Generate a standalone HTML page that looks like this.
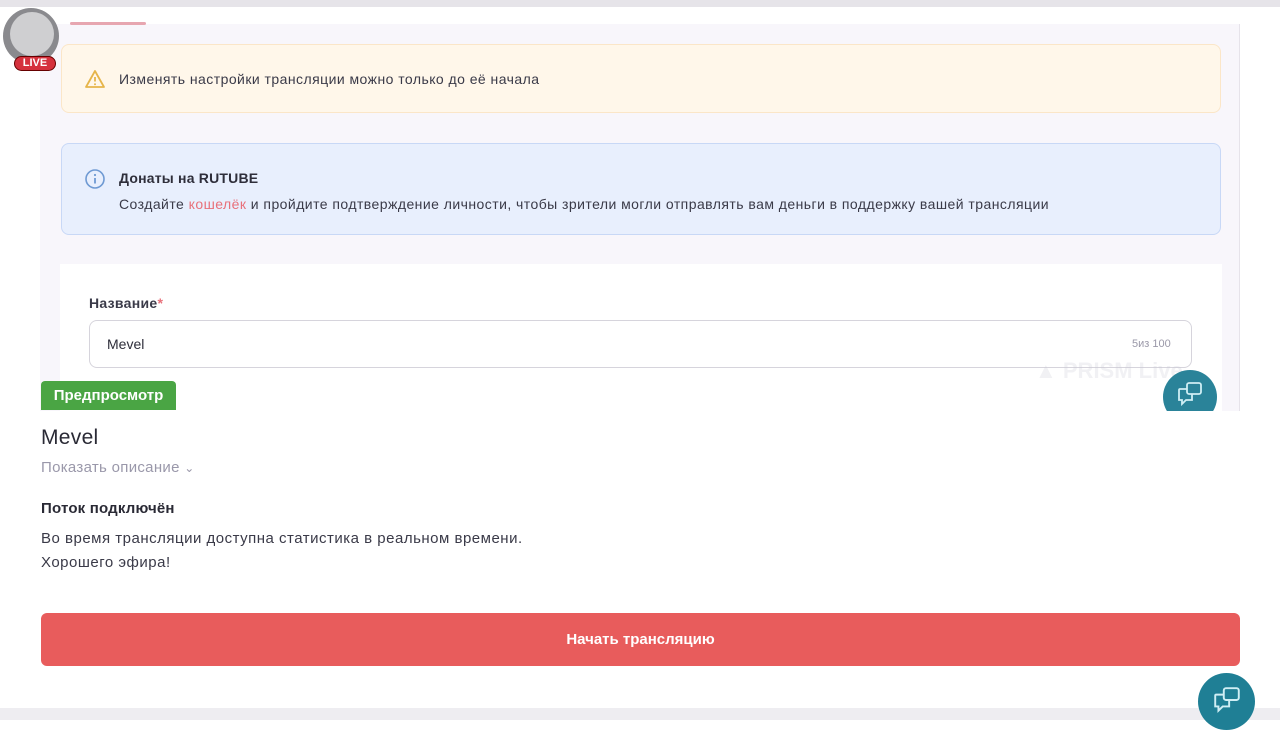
<!DOCTYPE html>
<html><head><meta charset="utf-8"><style>
*{margin:0;padding:0;box-sizing:border-box}
body{width:1280px;height:720px;background:#fff;font-family:"Liberation Sans",sans-serif;position:relative;overflow:hidden;color:#2a2a35}
.abs{position:absolute;white-space:nowrap}
</style></head><body>
<div class="abs" style="left:0;top:0;width:1280px;height:7px;background:#e6e4e9"></div>
<div class="abs" style="left:40px;top:7px;width:1200px;height:404px;background:#f8f6fb;border-right:1px solid #e6e3ea"></div>
<div class="abs" style="left:40px;top:7px;width:1200px;height:17px;background:#fff"></div>
<div class="abs" style="left:70px;top:22px;width:76px;height:3px;background:#e7a6b0;border-radius:2px"></div>
<div class="abs" style="left:61px;top:44px;width:1160px;height:69px;background:#fff7ea;border:1px solid #fbe6c8;border-radius:8px"></div>
<svg class="abs" style="left:84px;top:69px" width="22" height="20" viewBox="0 0 22 20"><path d="M11 2 L20 18 H2 Z" fill="none" stroke="#e6b54a" stroke-width="1.8" stroke-linejoin="round"/><line x1="11" y1="8" x2="11" y2="12.5" stroke="#e6b54a" stroke-width="1.8"/><circle cx="11" cy="15.2" r="1" fill="#e6b54a"/></svg>
<div class="abs" style="left:119px;top:71px;font-size:14px;letter-spacing:0.45px;color:#3a3a48">Изменять настройки трансляции можно только до её начала</div>
<div class="abs" style="left:61px;top:143px;width:1160px;height:92px;background:#e8effd;border:1px solid #c8d8f6;border-radius:8px"></div>
<svg class="abs" style="left:84px;top:168px" width="22" height="22" viewBox="0 0 22 22"><circle cx="11" cy="11" r="9" fill="none" stroke="#6f9ad3" stroke-width="1.6"/><line x1="11" y1="10" x2="11" y2="15.5" stroke="#6f9ad3" stroke-width="1.8"/><circle cx="11" cy="7" r="1.1" fill="#6f9ad3"/></svg>
<div class="abs" style="left:119px;top:170px;font-size:14px;font-weight:bold;letter-spacing:0.2px;color:#2e2e3a">Донаты на RUTUBE</div>
<div class="abs" style="left:119px;top:196px;font-size:14px;letter-spacing:0.45px;color:#3a3a48">Создайте <span style="color:#e8707a">кошелёк</span> и пройдите подтверждение личности, чтобы зрители могли отправлять вам деньги в поддержку вашей трансляции</div>
<div class="abs" style="left:60px;top:264px;width:1162px;height:147px;background:#fff"></div>
<div class="abs" style="left:89px;top:295px;font-size:14px;font-weight:bold;letter-spacing:0.3px;color:#3a3a48">Название<span style="color:#e8707a">*</span></div>
<div class="abs" style="left:89px;top:320px;width:1103px;height:48px;border:1px solid #d6d4dc;border-radius:8px;background:#fff"></div>
<div class="abs" style="left:107px;top:336px;font-size:14px;color:#2e2e3a">Mevel</div>
<div class="abs" style="left:1132px;top:338px;font-size:11px;color:#9a98a8">5из 100</div>
<div class="abs" style="left:1035px;top:358px;font-size:22px;font-weight:bold;color:rgba(200,200,210,.25)">▲ PRISM Live</div>
<div class="abs" style="left:1163px;top:370px;width:54px;height:41px;overflow:hidden"><div style="width:54px;height:54px;border-radius:50%;background:#2a8399"></div></div>
<svg class="abs" style="left:1176px;top:380px" width="28" height="28" viewBox="0 0 28 28" fill="none" stroke="#cfeef4" stroke-width="1.8"><rect x="11" y="3" width="14" height="11" rx="2"/><path d="M11 9 H4 a1 1 0 0 0 -1 1 V20 H6 V24 L10 20 H16 V14"/></svg>
<div class="abs" style="left:3px;top:8px;width:56px;height:56px;border-radius:50%;background:#8a8a8e"></div>
<div class="abs" style="left:10px;top:12px;width:44px;height:44px;border-radius:50%;background:#cfcfd1"></div>
<div class="abs" style="left:14px;top:56px;width:42px;height:15px;border-radius:8px;background:#d5313d;border:1px solid #600;color:#fff;font-size:11px;font-weight:bold;text-align:center;line-height:13px">LIVE</div>
<div class="abs" style="left:41px;top:381px;width:135px;height:29px;background:#4aa544;border-radius:4px 4px 0 0;color:#fff;font-size:15px;font-weight:bold;line-height:29px;text-align:center">Предпросмотр</div>
<div class="abs" style="left:41px;top:426px;font-size:21px;letter-spacing:0.3px;color:#2a2a35">Mevel</div>
<div class="abs" style="left:41px;top:459px;font-size:15px;letter-spacing:0.3px;color:#9a98aa">Показать описание <span style="font-size:12px">&#8964;</span></div>
<div class="abs" style="left:41px;top:500px;font-size:15px;font-weight:bold;letter-spacing:0.2px;color:#2a2a35">Поток подключён</div>
<div class="abs" style="left:41px;top:527px;font-size:15px;letter-spacing:0.5px;color:#3a3a48;line-height:24px">Во время трансляции доступна статистика в реальном времени.<br>Хорошего эфира!</div>
<div class="abs" style="left:41px;top:613px;width:1199px;height:53px;background:#e85c5c;border-radius:6px;color:#fff;font-size:15px;font-weight:bold;text-align:center;line-height:53px">Начать трансляцию</div>
<div class="abs" style="left:0;top:708px;width:1280px;height:12px;background:#eeedf1"></div>
<div class="abs" style="left:1198px;top:673px;width:57px;height:57px;border-radius:50%;background:#1f7f95"></div>
<svg class="abs" style="left:1212px;top:685px" width="30" height="30" viewBox="0 0 28 28" fill="none" stroke="#cfeef4" stroke-width="1.8"><rect x="11" y="3" width="14" height="11" rx="2"/><path d="M11 9 H4 a1 1 0 0 0 -1 1 V20 H6 V24 L10 20 H16 V14"/></svg>
</body></html>
